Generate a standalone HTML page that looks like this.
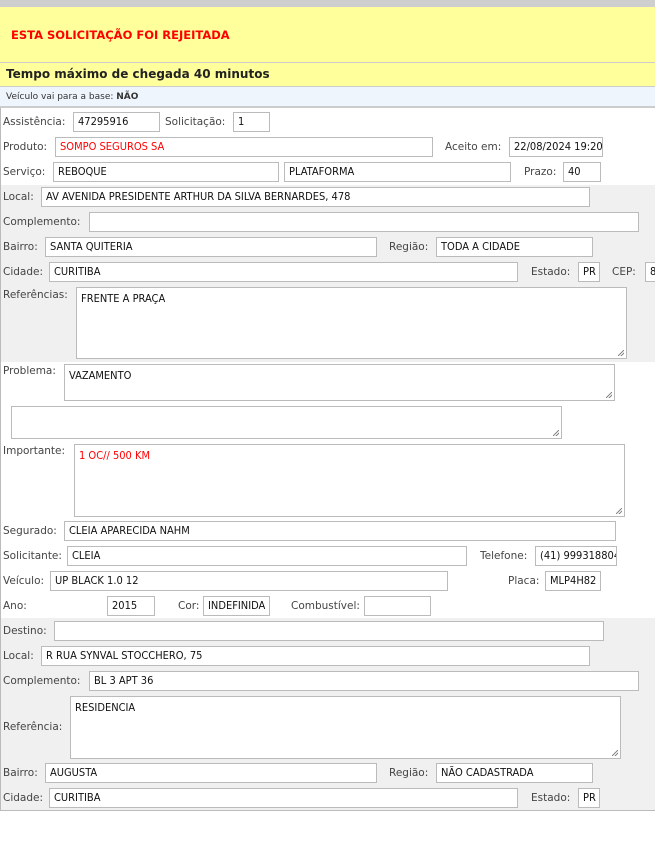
<!DOCTYPE html>
<html><head><meta charset="utf-8"><style>
*{margin:0;padding:0;box-sizing:border-box}
body{width:655px;height:857px;background:#fff;position:relative;overflow:hidden;font-family:"DejaVu Sans","Liberation Sans",sans-serif;font-size:11px;color:#333}
div{position:absolute}
.l{white-space:nowrap;color:#444;line-height:13px;margin-top:-1px;font-size:10.5px}
.i{border:1px solid #bbb;background:#fff;height:20px;padding:2px 0 0 4px;font-family:"DejaVu Sans Condensed","DejaVu Sans",sans-serif;font-size:11px;color:#111;white-space:nowrap;overflow:hidden;line-height:14px}
.t{border:1px solid #bbb;background:#fff;padding:4px 0 0 4px;font-family:"DejaVu Sans Condensed","DejaVu Sans",sans-serif;font-size:11px;color:#111}
.t:after{content:"";position:absolute;right:2px;bottom:2px;width:6px;height:6px;background:linear-gradient(135deg,transparent 45%,#888 45%,#888 55%,transparent 55%,transparent 70%,#888 70%,#888 80%,transparent 80%)}
.g{background:#f0f0f0;left:1px;width:654px}
</style></head><body>
<div style="left:0;top:0;width:655px;height:7px;background:#cfcfcf"></div>
<div style="left:0;top:7px;width:655px;height:56px;background:#ffff9c;border-bottom:1px solid #ccc"></div>
<div style="left:11px;top:28px;color:#f00;font-weight:bold;font-size:11.5px">ESTA SOLICITAÇÃO FOI REJEITADA</div>
<div style="left:0;top:63px;width:655px;height:24px;background:#ffff9c;border-bottom:1px solid #ccc"></div>
<div style="left:6px;top:67px;color:#222;font-weight:bold;font-size:12px">Tempo máximo de chegada 40 minutos</div>
<div style="left:0;top:87px;width:655px;height:21px;background:#eef5fd;border-bottom:2px solid #ccc"></div>
<div style="left:6px;top:92px;font-size:9px;color:#333">Veículo vai para a base: <b>NÃO</b></div>
<div style="left:0;top:108px;width:1px;height:703px;background:#bbb"></div>
<div style="left:0;top:810px;width:655px;height:1px;background:#bbb"></div>
<div class="g" style="top:185px;height:177px"></div>
<div class="g" style="top:618px;height:192px"></div>

<div class="l" style="left:3px;top:117px">Assistência:</div><div class="i" style="left:73px;top:112px;width:87px">47295916</div>
<div class="l" style="left:165px;top:117px">Solicitação:</div><div class="i" style="left:233px;top:112px;width:37px">1</div>
<div class="l" style="left:3px;top:142px">Produto:</div><div class="i" style="left:55px;top:137px;width:378px;color:#f00">SOMPO SEGUROS SA</div>
<div class="l" style="left:445px;top:142px">Aceito em:</div><div class="i" style="left:509px;top:137px;width:94px">22/08/2024 19:20</div>
<div class="l" style="left:3px;top:167px">Serviço:</div><div class="i" style="left:53px;top:162px;width:226px">REBOQUE</div>
<div class="i" style="left:284px;top:162px;width:227px">PLATAFORMA</div>
<div class="l" style="left:524px;top:167px">Prazo:</div><div class="i" style="left:563px;top:162px;width:38px">40</div>

<div class="l" style="left:3px;top:192px">Local:</div><div class="i" style="left:41px;top:187px;width:549px">AV AVENIDA PRESIDENTE ARTHUR DA SILVA BERNARDES, 478</div>
<div class="l" style="left:3px;top:217px">Complemento:</div><div class="i" style="left:89px;top:212px;width:550px"></div>
<div class="l" style="left:3px;top:242px">Bairro:</div><div class="i" style="left:45px;top:237px;width:332px">SANTA QUITERIA</div>
<div class="l" style="left:389px;top:242px">Região:</div><div class="i" style="left:436px;top:237px;width:157px">TODA A CIDADE</div>
<div class="l" style="left:3px;top:267px">Cidade:</div><div class="i" style="left:49px;top:262px;width:469px">CURITIBA</div>
<div class="l" style="left:531px;top:267px">Estado:</div><div class="i" style="left:578px;top:262px;width:22px">PR</div>
<div class="l" style="left:612px;top:267px">CEP:</div><div class="i" style="left:645px;top:262px;width:20px">80</div>
<div class="l" style="left:3px;top:290px">Referências:</div><div class="t" style="left:76px;top:287px;width:551px;height:72px">FRENTE A PRAÇA</div>

<div class="l" style="left:3px;top:366px">Problema:</div><div class="t" style="left:64px;top:364px;width:551px;height:37px">VAZAMENTO</div>
<div class="t" style="left:11px;top:406px;width:551px;height:33px"></div>
<div class="l" style="left:3px;top:446px">Importante:</div><div class="t" style="left:74px;top:444px;width:551px;height:73px;color:#f00">1 OC// 500 KM</div>

<div class="l" style="left:3px;top:526px">Segurado:</div><div class="i" style="left:64px;top:521px;width:552px">CLEIA APARECIDA NAHM</div>
<div class="l" style="left:3px;top:551px">Solicitante:</div><div class="i" style="left:67px;top:546px;width:400px">CLEIA</div>
<div class="l" style="left:480px;top:551px">Telefone:</div><div class="i" style="left:535px;top:546px;width:82px">(41) 999318804</div>
<div class="l" style="left:3px;top:576px">Veículo:</div><div class="i" style="left:50px;top:571px;width:398px">UP BLACK 1.0 12</div>
<div class="l" style="left:508px;top:576px">Placa:</div><div class="i" style="left:545px;top:571px;width:56px">MLP4H82</div>
<div class="l" style="left:3px;top:601px">Ano:</div><div class="i" style="left:107px;top:596px;width:48px">2015</div>
<div class="l" style="left:178px;top:601px">Cor:</div><div class="i" style="left:203px;top:596px;width:67px">INDEFINIDA</div>
<div class="l" style="left:291px;top:601px">Combustível:</div><div class="i" style="left:364px;top:596px;width:67px"></div>

<div class="l" style="left:3px;top:626px">Destino:</div><div class="i" style="left:54px;top:621px;width:550px"></div>
<div class="l" style="left:3px;top:651px">Local:</div><div class="i" style="left:41px;top:646px;width:549px">R RUA SYNVAL STOCCHERO, 75</div>
<div class="l" style="left:3px;top:676px">Complemento:</div><div class="i" style="left:89px;top:671px;width:550px">BL 3 APT 36</div>
<div class="l" style="left:3px;top:722px">Referência:</div><div class="t" style="left:70px;top:696px;width:551px;height:63px">RESIDENCIA</div>
<div class="l" style="left:3px;top:768px">Bairro:</div><div class="i" style="left:45px;top:763px;width:332px">AUGUSTA</div>
<div class="l" style="left:389px;top:768px">Região:</div><div class="i" style="left:436px;top:763px;width:157px">NÃO CADASTRADA</div>
<div class="l" style="left:3px;top:793px">Cidade:</div><div class="i" style="left:49px;top:788px;width:469px">CURITIBA</div>
<div class="l" style="left:531px;top:793px">Estado:</div><div class="i" style="left:578px;top:788px;width:22px">PR</div>
</body></html>
